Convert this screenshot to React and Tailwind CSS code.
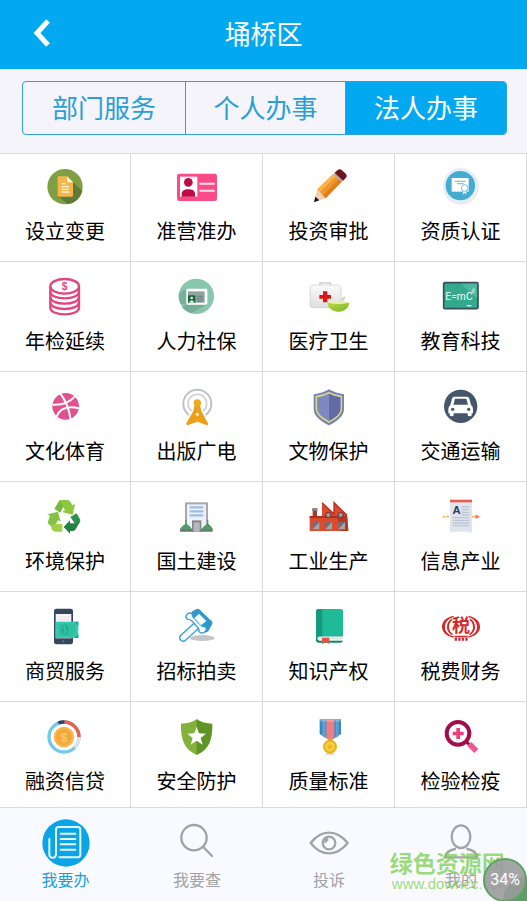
import React, { useState } from 'react';

// Ikon layanan, semua digambar di kanvas 120 x 120
const Icon = ({ children }) => (
  <svg viewBox="0 0 120 120" className="h-10 w-10 shrink-0 overflow-visible" fill="none" aria-hidden="true">
    {children}
  </svg>
);

const SetupIcon = () => (
  <Icon>
    <circle cx="60" cy="59" r="53" fill="#7f9f45" />
    <path d="M84 46l28 26a53 53 0 0 1-44 40L40 88z" fill="#5f7a36" />
    <path d="M42 28h24l18 18v39a4 4 0 0 1-4 4H42a4 4 0 0 1-4-4V32a4 4 0 0 1 4-4z" fill="#f5b64c" />
    <path d="M66 28l18 18H70a4 4 0 0 1-4-4z" fill="#fff4dc" />
    <path d="M50 50h12M50 59h22M50 67h22M50 75h22" stroke="#fff6e0" strokeWidth="4" />
  </Icon>
);

const CardIcon = () => (
  <Icon>
    <rect x="0" y="20" width="120" height="82" rx="7" fill="#fb4b87" />
    <rect x="9" y="29" width="52" height="60" fill="#fff" />
    <circle cx="34" cy="46" r="13" fill="#bf0a48" />
    <path d="M14 89V80c0-9 9-13 20-13s20 4 20 13v9z" fill="#bf0a48" />
    <path d="M67 50h46M67 71h46" stroke="#ffe3ee" strokeWidth="6" />
  </Icon>
);

const PencilIcon = () => (
  <Icon>
    <path d="M25 67L50 94L15 105z" fill="#f3cfae" />
    <path d="M19 89l12 11-16 6z" fill="#1c1414" />
    <path d="M25 67L73 21L98 44L50 94z" fill="#f0962a" />
    <path d="M25 67L73 21L81 28L33 75z" fill="#f9b34c" />
    <path d="M42 85L90 36L98 44L50 94z" fill="#dd7f1f" />
    <path d="M73 21l5-5 25 23-5 5z" fill="#b9a7a0" />
    <path d="M77 17l9-8q6-5 12 0l13 12q5 6 0 11l-9 9z" fill="#6d1420" />
  </Icon>
);

const CertIcon = () => (
  <Icon>
    <circle cx="60" cy="60" r="53" fill="#f6e3e6" />
    <circle cx="59" cy="56" r="53" fill="#e6eef5" />
    <circle cx="58" cy="56" r="44" fill="#44abd1" />
    <rect x="32" y="33" width="51" height="41" fill="#fff" />
    <path d="M42 43h32M48 50h20" stroke="#7cc4de" strokeWidth="4" />
    <path d="M65 68v16l6-5 6 5V68z" fill="#fff" stroke="#44abd1" strokeWidth="2" />
    <circle cx="71" cy="63" r="10" fill="#fff" stroke="#44abd1" strokeWidth="2" />
  </Icon>
);

const CoinsIcon = () => (
  <Icon>
    <g stroke="#e4457c" strokeWidth="7">
      <ellipse cx="59" cy="28" rx="43" ry="22" />
      <path d="M16 28v64c0 12 19 20 43 20s43-8 43-20V28" />
      <path d="M16 44c0 12 19 20 43 20s43-8 43-20M16 60c0 12 19 20 43 20s43-8 43-20M16 76c0 12 19 20 43 20s43-8 43-20" />
    </g>
    <text x="59" y="39" textAnchor="middle" fontSize="31" fontWeight="700" fill="#e4457c" fontFamily="Liberation Sans, sans-serif">$</text>
  </Icon>
);

const IdIcon = () => (
  <Icon>
    <circle cx="58" cy="58" r="53" fill="#88c6ad" />
    <path d="M29 82l-14 8a53 53 0 0 0 28 19l48-27z" fill="#76ad98" />
    <path d="M6 48l23-12v46H12A53 53 0 0 1 6 48z" fill="#79b09b" />
    <rect x="28" y="35" width="63" height="48" rx="4" fill="#fff" />
    <rect x="33" y="43" width="50" height="34" fill="#8fa3a0" />
    <rect x="33" y="55" width="22" height="22" fill="#14663f" />
    <circle cx="44" cy="63" r="4" fill="#d8efe2" />
    <path d="M37 77c0-10 14-10 14 0z" fill="#d8efe2" />
    <path d="M60 58h18M60 65h18M60 72h18" stroke="#677c7a" strokeWidth="3" />
  </Icon>
);

const MedicalIcon = () => (
  <Icon>
    <defs>
      <linearGradient id="bowl" x1="0" y1="0" x2="1" y2="1">
        <stop offset="0" stopColor="#b9dc4e" />
        <stop offset="1" stopColor="#7db51e" />
      </linearGradient>
      <linearGradient id="kit" x1="0" y1="0" x2="0" y2="1">
        <stop offset="0" stopColor="#fbfbfb" />
        <stop offset="1" stopColor="#dedee0" />
      </linearGradient>
    </defs>
    <path d="M33 26v-8h31v8" stroke="#cfcfd2" strokeWidth="5" />
    <rect x="3" y="24" width="93" height="68" rx="8" fill="url(#kit)" stroke="#cacacd" strokeWidth="2" />
    <path d="M42 43h13v11h11v11H55v11H42V65H31V54h11z" fill="#e01414" />
    <path d="M86 76l16-16q7-4 8 3L98 78z" fill="#d5d5d8" />
    <ellipse cx="88" cy="77" rx="32" ry="6" fill="#e2f3a8" />
    <path d="M56 77q32 8 64 0c0 14-9 20-17 24q-15 6-30 0c-8-4-17-10-17-24z" fill="url(#bowl)" />
  </Icon>
);

const BoardIcon = () => (
  <Icon>
    <rect x="8" y="17" width="103" height="78" rx="4" fill="#35a98d" stroke="#35505b" strokeWidth="5" />
    <path d="M60 20h48v44z" fill="#4fb99f" />
    <text x="54" y="68" textAnchor="middle" fontSize="31" fill="#e9fff8" fontFamily="Roboto, sans-serif">E=mC</text>
    <path d="M94 36h6v5h-6v5h7" stroke="#e9fff8" strokeWidth="2" />
    <path d="M78 86h13" stroke="#e9fff8" strokeWidth="4" />
  </Icon>
);

const BallIcon = () => (
  <Icon>
    <circle cx="62" cy="58" r="40" fill="#e1518e" />
    <path d="M46 20c16 20 26 45 31 78M23 53c26 2 48-4 66-24M34 90c10-26 34-34 68-26" stroke="#fff" strokeWidth="6" />
  </Icon>
);

const TowerIcon = () => (
  <Icon>
    <path d="M36 84a42 42 0 1 1 50 0" stroke="#c0c2c6" strokeWidth="6" />
    <path d="M44 72a28 28 0 1 1 34 0" stroke="#ced0d3" strokeWidth="5" />
    <path d="M54 50h14l5 22 20 37q2 7-5 5l-27-10-27 10q-7 2-6-5l21-37z" fill="#eba017" />
    <circle cx="61" cy="48" r="11" fill="#f3a81a" />
    <circle cx="61" cy="82" r="5" fill="#fff2cc" />
  </Icon>
);

const ShieldIcon = () => (
  <Icon>
    <path d="M60 7q20 12 45 15v44c0 22-22 38-45 49C37 104 14 88 14 66V22Q40 19 60 7z" fill="#7882b6" />
    <path d="M60 17q17 9 37 12v36c0 18-18 30-37 40-19-10-38-22-38-40V29q21-3 38-12z" fill="#7e89c0" stroke="#d9d87a" strokeWidth="5" />
    <path d="M60 20q16 8 34 11v34c0 16-16 27-34 37z" fill="#626ba6" />
  </Icon>
);

const CarIcon = () => (
  <Icon>
    <circle cx="59" cy="58" r="50" fill="#46566a" />
    <path d="M40 29h38q6 0 7 6l5 19q6 5 6 12v13h-4v5q0 4-6 4t-6-4v-5H38v5q0 4-6 4t-6-4v-5h-4V66q0-7 6-12l5-19q1-6 7-6z" fill="#fff" />
    <path d="M42 35h34l5 18H37z" fill="#46566a" />
    <circle cx="35" cy="67" r="5" fill="#46566a" />
    <circle cx="83" cy="67" r="5" fill="#46566a" />
  </Icon>
);

const RecycleIcon = () => (
  <Icon>
    <path d="M28 36L42 12q2-3 6-3h8l4 10-14 28z" fill="#77b83f" />
    <path d="M46 9h21q6 0 9 5l6 11 8-4-7 32-32-8 9-5-9-17z" fill="#8dc63f" />
    <path d="M15 56l-7-4 31-8 8 30-8-4-10 17q-3 6 2 13L10 80q-3-5 0-9z" fill="#82c341" />
    <path d="M18 93q2-12 12-12h22v23H32q-9 0-14-11z" fill="#9ed04a" />
    <path d="M76 60l19-11 10 18q2 4 0 8l-4 5q-3 4-9 3z" fill="#2f9150" />
    <path d="M104 76L92 97q-3 5-9 5h-8v8L56 90l19-20v9h17q7 0 12-3z" fill="#238243" />
  </Icon>
);

const BuildingIcon = () => (
  <Icon>
    <path d="M24 16h69v84H24z" fill="#a6a8ae" />
    <path d="M30 22h57v78H30z" fill="#eef2f8" />
    <path d="M38 31h41M38 43h41M38 55h41" stroke="#9dbde8" strokeWidth="7" />
    <path d="M9 95h98v9H9z" fill="#6d7270" />
    <path d="M45 70h28v34H45z" fill="#85878c" />
    <path d="M50 76h18v28H50z" fill="#b5b8bd" />
    <path d="M10 98c0-8 9-12 15-18V68h4v12c6 6 15 10 15 18zM75 98c0-8 9-12 15-18V68h4v12c6 6 13 10 13 18z" fill="#4f9b6b" />
  </Icon>
);

const FactoryIcon = () => (
  <Icon>
    <path d="M11 34h13v26H11z" fill="#a33b2c" />
    <path d="M9 34h17v7H9z" fill="#8e8e92" />
    <path d="M2 57h37V17l36 34V17l39 38 4 47H2z" fill="#dc4b2e" />
    <path d="M39 17l36 34V17l39 38" stroke="#b2301f" strokeWidth="4" />
    <path d="M2 57h112v6H2z" fill="#b2301f" />
    <path d="M84 60h31l3 42H95z" fill="#b93722" />
    <path d="M11 75h20v22H11zM49 75h20v22H49zM88 75h20v22H88z" fill="#6f6c78" />
    <path d="M11 97l20-22v22zM49 97l20-22v22zM88 97l20-22v22z" fill="#a8a3a8" />
    <circle cx="58" cy="54" r="8" fill="#9c9aa2" stroke="#6b2a24" strokeWidth="3" />
    <circle cx="95" cy="54" r="8" fill="#9c9aa2" stroke="#6b2a24" strokeWidth="3" />
  </Icon>
);

const PaperIcon = () => (
  <Icon>
    <path d="M5 59h23" stroke="#f3b55e" strokeWidth="5" strokeDasharray="8 3" />
    <path d="M92 59h20" stroke="#f3b55e" strokeWidth="5" />
    <path d="M104 52l13 7-13 7z" fill="#ee7d6a" />
    <path d="M27 12h66v92l-8 8v-8H27z" fill="#dfe4ee" />
    <path d="M27 8h66v8H27z" fill="#e8614f" />
    <path d="M62 30h23M62 38h23M62 46h23M35 62h50M35 70h50M35 78h50M35 86h50M62 54h23" stroke="#bcc5d3" strokeWidth="4" />
    <text x="47" y="50" textAnchor="middle" fontSize="34" fontWeight="700" fill="#2c3e57" fontFamily="Liberation Sans, sans-serif">A</text>
  </Icon>
);

const PhonePayIcon = () => (
  <Icon>
    <rect x="27" y="5" width="57" height="107" rx="7" fill="#36475b" />
    <path d="M32 21h47v73H32z" fill="#f3f6fa" />
    <path d="M36 30h38M36 38h38" stroke="#f7cfd3" strokeWidth="2" />
    <path d="M32 44h68v49H32z" fill="#37cbad" />
    <path d="M40 50h52v37H40z" fill="#2fc0a4" />
    <ellipse cx="60" cy="68" rx="11" ry="15" fill="#23a88d" />
    <path d="M64 61q-7-4-8 1t5 6 3 7q-4 3-9 0M60 56v24" stroke="#37cbad" strokeWidth="3" />
    <path d="M100 44H88l12 12zM100 93H88l12-12z" fill="#23a88d" />
    <circle cx="55" cy="103" r="3" fill="#6b7b8f" />
  </Icon>
);

const GavelIcon = () => (
  <Icon>
    <ellipse cx="76" cy="93" rx="37" ry="9" fill="#c4c6c9" />
    <path d="M52 48L66 63L24 101q-7 4-13-2t-1-13z" fill="#f4fafe" stroke="#3a9fd3" strokeWidth="4" />
    <path d="M47 12l14-7q8 0 12 8l27 26q8 3 6 11l-12 23q-7 6-13 1 1-9-5-15L59 43q-6-6-15-4-10-5-5-15z" fill="#2f97cf" />
    <path d="M28 25q6-11 17-5 1 9 6 13l20 21q6 6 15 5 5 10-4 17-10 5-16-2 1-8-4-13L44 41q-4-4-12-4-8-5-4-12z" fill="#f4fafe" stroke="#3a9fd3" strokeWidth="4" />
    <path d="M52 33l14-13 22 22-16 13z" fill="#f4fafe" />
  </Icon>
);

const BookIcon = () => (
  <Icon>
    <rect x="21" y="80" width="81" height="27" rx="7" fill="#16876c" />
    <path d="M31 88h71v13H31q-6-1-6-6t6-7z" fill="#edf1f0" />
    <path d="M30 94h70" stroke="#cbd6d3" strokeWidth="2" />
    <path d="M29 6h66q7 0 7 7v75H30q-6 0-9 5V14q0-8 8-8z" fill="#1fba97" />
    <path d="M29 6h11v82H30q-6 0-9 5V14q0-8 8-8z" fill="#169a7e" />
    <path d="M39 92h22v20l-11-8-11 8z" fill="#e0544a" />
  </Icon>
);

const TaxIcon = () => (
  <Icon>
    <g fill="#d4282c">
      <path d="M38 26C14 31 2 44 3 61c1 16 15 28 35 31v-4C22 84 12 75 12 60c0-15 10-25 26-30z" />
      <path d="M34 34C24 39 18 48 18 60c0 12 7 20 17 25v-5c-7-4-11-11-11-20 0-9 3-15 10-21z" />
      <path d="M82 26c24 5 36 18 35 35-1 16-15 28-35 31v-4c16-4 26-13 26-28 0-15-10-25-26-30z" />
      <path d="M86 34c10 5 16 14 16 26 0 12-7 20-17 25v-5c7-4 11-11 11-20 0-9-3-15-10-21z" />
      <path d="M40 86h40v5H40zM41 92h7v9h-7zM52 92h7v9h-7zM63 92h6v9h-6zM73 92h7v9h-7z" />
    </g>
    <text x="60" y="75" textAnchor="middle" fontSize="54" fontWeight="700" fill="#d4282c" fontFamily="Noto Sans CJK SC, sans-serif">税</text>
  </Icon>
);

const LoanIcon = () => (
  <Icon>
    <circle cx="57" cy="60" r="45" stroke="#74c8ec" strokeWidth="10" />
    <path d="M57 15a45 45 0 0 1 45 45" stroke="#e8604e" strokeWidth="10" />
    <path d="M102 60a45 45 0 0 1-13 32" stroke="#dde2ee" strokeWidth="10" />
    <path d="M40 18a45 45 0 0 1 18-3" stroke="#2f4258" strokeWidth="10" />
    <circle cx="57" cy="60" r="31" fill="#f8b84e" />
    <circle cx="57" cy="60" r="24" fill="#f4a73a" />
    <text x="57" y="74" textAnchor="middle" fontSize="38" fill="#fbc96d" fontWeight="700" fontFamily="Liberation Sans, sans-serif">$</text>
  </Icon>
);

const SafetyIcon = () => (
  <Icon>
    <path d="M60 6Q40 20 12 20c-1 48 10 78 48 94z" fill="#82b13c" />
    <path d="M59 6q19 14 47 14c1 48-10 78-47 94z" fill="#5f9427" />
    <path d="M59 30l7 19 21 1-16 13 6 20-18-12-18 12 6-20-16-13 21-1z" fill="#fff" />
  </Icon>
);

const MedalIcon = () => (
  <Icon>
    <path d="M32 7h64v44L64 71 32 51z" fill="#3b87bd" />
    <path d="M40 7h10v56l-10-6zM80 7h9v50l-9 5z" fill="#5ba4d2" />
    <path d="M52 7h24v55l-12 9-12-8z" fill="#ef7d84" />
    <path d="M32 7h64v7H32z" fill="#ffffff" opacity=".25" />
    <ellipse cx="63" cy="111" rx="16" ry="3" fill="#dcdcdc" />
    <path d="M58 64h11v8H58z" fill="#d9a722" />
    <circle cx="63" cy="89" r="21" fill="#e9b020" />
    <circle cx="63" cy="89" r="15" fill="#f7ce3e" />
    <path d="M63 80l3 6 6 1-5 4 1 7-5-4-5 4 1-7-5-4 6-1z" fill="#eab41f" />
  </Icon>
);

const InspectIcon = () => (
  <Icon>
    <path d="M74 72l10 10" stroke="#8f0b44" strokeWidth="9" />
    <path d="M85 81l21 21" stroke="#f0568f" strokeWidth="17" />
    <circle cx="51" cy="49" r="34" fill="#fff" stroke="#a30c4d" strokeWidth="12" />
    <path d="M46 33h11v11h11v11H57v11H46V55H35V44h11z" fill="#ee3c7c" />
  </Icon>
);

const services = [
  { label: '设立变更', icon: SetupIcon },
  { label: '准营准办', icon: CardIcon },
  { label: '投资审批', icon: PencilIcon },
  { label: '资质认证', icon: CertIcon },
  { label: '年检延续', icon: CoinsIcon },
  { label: '人力社保', icon: IdIcon },
  { label: '医疗卫生', icon: MedicalIcon },
  { label: '教育科技', icon: BoardIcon },
  { label: '文化体育', icon: BallIcon },
  { label: '出版广电', icon: TowerIcon },
  { label: '文物保护', icon: ShieldIcon },
  { label: '交通运输', icon: CarIcon },
  { label: '环境保护', icon: RecycleIcon },
  { label: '国土建设', icon: BuildingIcon },
  { label: '工业生产', icon: FactoryIcon },
  { label: '信息产业', icon: PaperIcon },
  { label: '商贸服务', icon: PhonePayIcon },
  { label: '招标拍卖', icon: GavelIcon },
  { label: '知识产权', icon: BookIcon },
  { label: '税费财务', icon: TaxIcon },
  { label: '融资信贷', icon: LoanIcon },
  { label: '安全防护', icon: SafetyIcon },
  { label: '质量标准', icon: MedalIcon },
  { label: '检验检疫', icon: InspectIcon },
];

const tabs = ['部门服务', '个人办事', '法人办事'];

const navItems = [
  {
    label: '我要办',
    active: true,
    icon: (
      <>
        <circle cx="72" cy="72" r="71" fill="#0aa5e6" />
        <g stroke="#e8f7ff" strokeWidth="6" strokeLinecap="round" strokeLinejoin="round">
          <path d="M42 106V32q0-8 8-8h57q8 0 8 8v75q0 8-8 8H52" />
          <path d="M42 104q0 12-10 12T22 104V60" />
          <path d="M56 44h44M56 60h44M56 76h44M56 92h44" />
        </g>
      </>
    ),
  },
  {
    label: '我要查',
    icon: (
      <g stroke="#a3a3a5" strokeWidth="7" strokeLinecap="round">
        <circle cx="63" cy="56" r="38" />
        <path d="M91 84l26 27" />
      </g>
    ),
  },
  {
    label: '投诉',
    icon: (
      <g stroke="#a3a3a5" strokeWidth="7" strokeLinejoin="round">
        <path d="M17 72q24-31 55-31t56 31q-25 31-56 31T17 72z" />
        <circle cx="72" cy="72" r="19" />
        <path d="M61 71q0-9 9-10" strokeWidth="8" />
      </g>
    ),
  },
  {
    label: '我的',
    icon: (
      <g stroke="#a3a3a5" strokeWidth="7" strokeLinecap="round" strokeLinejoin="round">
        <ellipse cx="72" cy="53" rx="28" ry="34" />
        <path d="M54 90q-26 4-30 25h97q-4-21-30-25" />
      </g>
    ),
  },
];

export default function App() {
  const [activeTab, setActiveTab] = useState(2);

  return (
    <div className="flex min-h-screen flex-col bg-[#f9faff] font-['Noto_Sans_CJK_SC',sans-serif]">
      <header className="grid h-[69px] grid-cols-[84px_1fr_84px] items-center bg-[#02a9f0] pb-1 text-white">
        <button aria-label="返回" className="flex h-full items-center pl-8">
          <svg viewBox="0 0 20 28" className="h-7 w-5" fill="none" stroke="#fff" strokeWidth="5">
            <path d="M16 2L5 14l11 12" />
          </svg>
        </button>
        <h1 className="text-center text-[26px] leading-8">埇桥区</h1>
      </header>

      <div className="bg-[#f4f4fa] pt-3 pr-5 pb-[18px] pl-[22px]">
        <div className="grid h-[54px] grid-cols-[163fr_160fr_160fr] overflow-hidden rounded border border-[#2ba3d9]">
          {tabs.map((tab, index) => (
            <button
              key={tab}
              onClick={() => setActiveTab(index)}
              className={`border-r border-[#2ba3d9] pb-0.5 text-[26px] leading-8 last:border-r-0 ${
                activeTab === index ? 'bg-[#02a9f0] text-white' : 'text-[#2a9fd6]'
              }`}
            >
              {tab}
            </button>
          ))}
        </div>
      </div>

      <main className="grid grid-cols-[131fr_132fr_132fr_132fr] grid-rows-[108px_repeat(4,110px)_106px] border-t border-[#d9dade] bg-white">
        {services.map(({ label, icon: ServiceIcon }, index) => (
          <a
            key={label}
            href="#"
            className={`flex flex-col items-center gap-2 border-r border-b border-[#d9dade] ${
              index < 4 ? 'pt-[13px]' : 'pt-[15px]'
            }`}
          >
            <ServiceIcon />
            <span className="text-[20px] leading-8 text-black">{label}</span>
          </a>
        ))}
      </main>

      <nav className="relative grid flex-1 grid-cols-[131fr_132fr_132fr_132fr] overflow-hidden">
        {navItems.map(({ label, icon, active }) => (
          <a key={label} href="#" className="flex flex-col items-center pt-[11px]">
            <svg viewBox="0 0 144 144" className="h-12 w-12" fill="none" aria-hidden="true">
              {icon}
            </svg>
            <span className={`text-base leading-6 ${active ? 'text-[#1b9fdb]' : 'text-[#a3a3a5]'}`}>{label}</span>
          </a>
        ))}

        <div className="pointer-events-none absolute top-10 right-4 text-[#7cd04e]/75">
          <p className="text-[23px] leading-7 font-bold">绿色资源网</p>
          <p className="pl-0.5 font-['Liberation_Sans',sans-serif] text-[15px] leading-4">www.downcc.com</p>
        </div>

        {/* Lencana progres yang melayang di pojok kanan bawah */}
        <div className="absolute right-0 bottom-0 h-6 w-6 rounded-tl-full bg-[#5f9f66]"></div>
        <div className="absolute right-0 bottom-[-1px] flex h-11 w-11 items-center justify-center rounded-full border-2 border-[#5aa560] bg-[#9b9b9d]/90 font-['Roboto',sans-serif] text-base text-white">
          34%
        </div>
      </nav>
    </div>
  );
}
